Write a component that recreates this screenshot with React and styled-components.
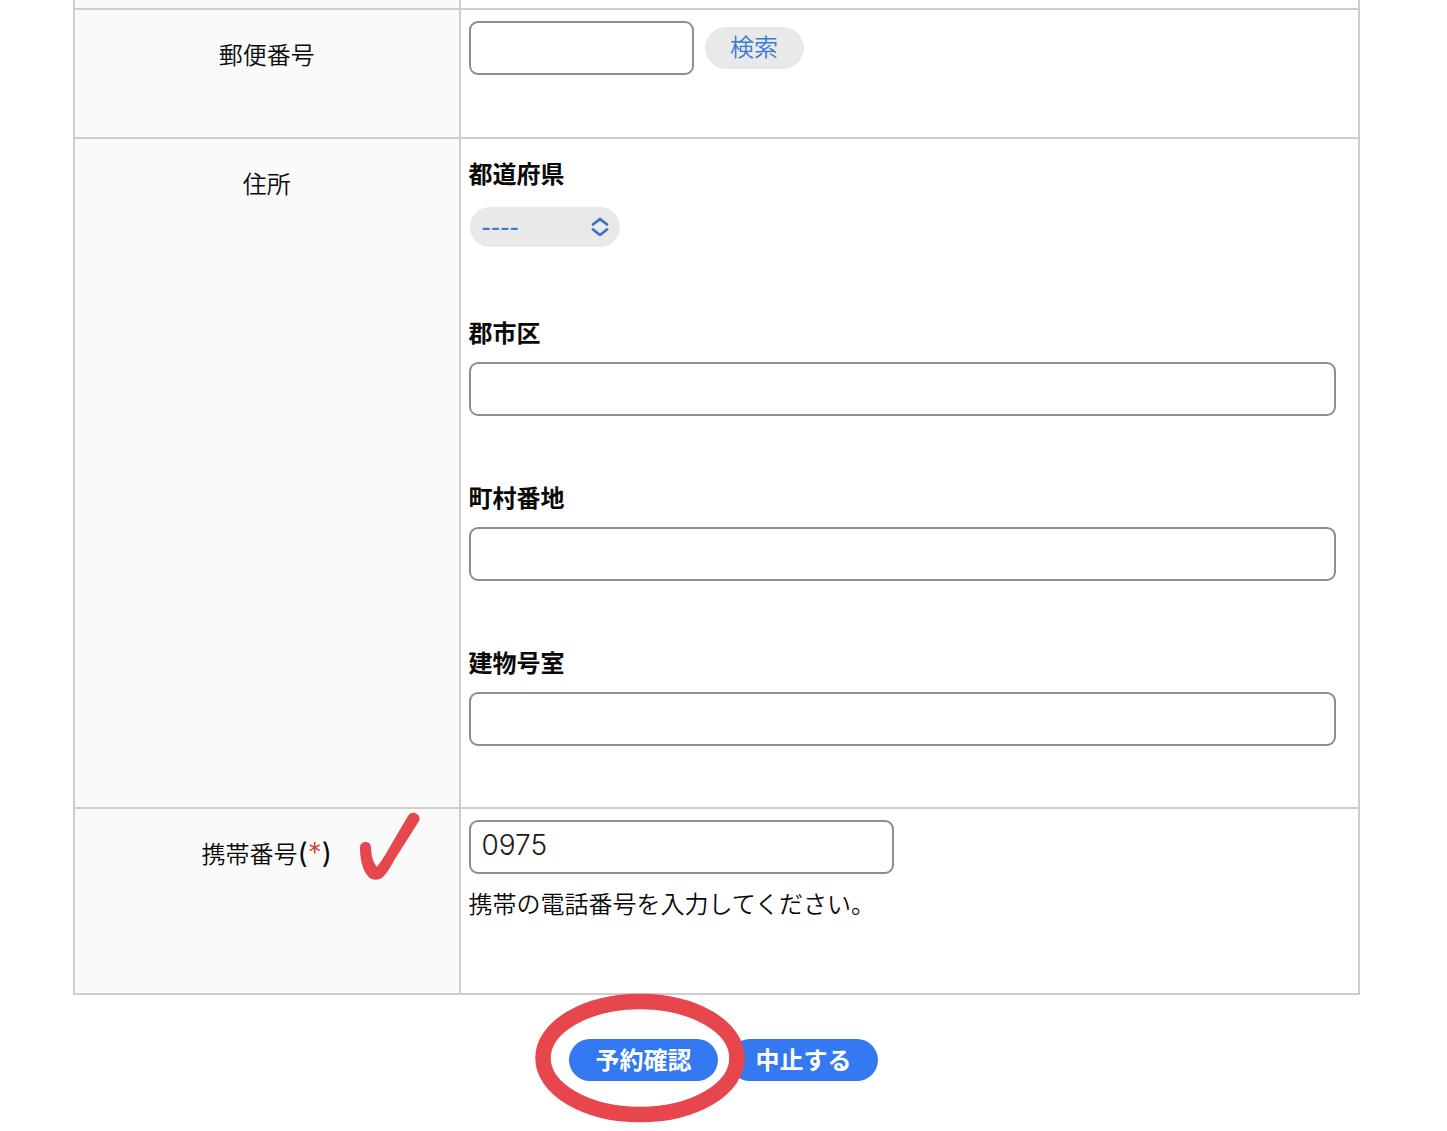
import { useState } from "react";
import styled, { createGlobalStyle } from "styled-components";

const GlobalStyle = createGlobalStyle`
  * {
    box-sizing: border-box;
  }
  body {
    margin: 0;
    background: #fff;
    color: #0a0a0a;
    font-family: "Noto Sans CJK JP", sans-serif;
    font-size: 24px;
    line-height: 36px;
  }
  input, select, button {
    font: inherit;
  }
`;

const FormArea = styled.div`
  padding: 0 87px 0 73px;
`;

const FormTable = styled.table`
  width: 100%;
  table-layout: fixed;
  border-collapse: collapse;
`;

const HeadCell = styled.th`
  position: relative;
  width: 30%;
  padding: ${(props) => (props.$slim ? "0" : "26px 8px 0")};
  border: 2px solid #cdcdcd;
  border-top-width: ${(props) => (props.$slim ? "0" : "2px")};
  background: #fafafa;
  font-weight: 350;
  text-align: center;
  vertical-align: top;
`;

const BodyCell = styled.td`
  height: ${(props) => (props.$slim ? "9px" : "auto")};
  padding: ${(props) => (props.$slim ? "0" : "11px 22px 61px 8px")};
  border: 2px solid #cdcdcd;
  border-top-width: ${(props) => (props.$slim ? "0" : "2px")};
  vertical-align: top;
`;

const Mark = styled.span`
  color: ${(props) => (props.$required ? "#d63a2c" : "inherit")};
  font-family: Inter, sans-serif;
  font-size: 28px;
  font-weight: ${(props) => (props.$required ? "300" : "400")};
`;

const TextInput = styled.input`
  display: block;
  width: ${(props) => props.$width || "100%"};
  height: 54px;
  padding: 0 11px 4px;
  border: 2px solid #8e8e8e;
  border-radius: 9px;
  background: #fff;
  color: #1a1a1a;
  font-family: Inter, sans-serif;
  font-size: 28px;
  font-weight: 350;
  outline: none;
`;

const ZipRow = styled.div`
  display: flex;
  align-items: center;
  gap: 11px;
  padding-bottom: 1px;
`;

const SearchButton = styled.button`
  width: 99px;
  height: 42px;
  padding: 0 0 4px;
  border: 0;
  border-radius: 21px;
  background: #e9e9e9;
  color: #3b7bd0;
  font-weight: 350;
  line-height: 36px;
`;

const AddressFields = styled.div`
  display: flex;
  flex-direction: column;
  gap: 63px;
  padding-top: 5px;
`;

const Field = styled.div`
  display: flex;
  flex-direction: column;
  align-items: flex-start;
  gap: 12px;
`;

const FieldLabel = styled.label`
  font-weight: 700;
`;

const SelectBox = styled.div`
  display: grid;
  align-items: center;
  width: 150px;
  margin: 4px 1px;
`;

const Select = styled.select`
  grid-area: 1 / 1;
  width: 100%;
  height: 40px;
  padding: 0 40px 0 12px;
  border: 0;
  border-radius: 20px;
  background: #e9e9e9;
  color: #3b7bd0;
  font-family: "Liberation Sans", "Noto Sans CJK JP", sans-serif;
  font-size: 28px;
  appearance: none;
  outline: none;
`;

const SelectArrows = styled.svg`
  grid-area: 1 / 1;
  justify-self: end;
  margin-right: 11px;
  pointer-events: none;
`;

const HelpText = styled.p`
  margin: 11px 0;
  font-weight: 350;
`;

const CheckMark = styled.svg`
  position: absolute;
  top: 1px;
  right: 38px;
`;

const Actions = styled.div`
  display: flex;
  justify-content: center;
  gap: 11px;
  margin-top: 44px;
  padding-bottom: 50px;
`;

const Highlighted = styled.div`
  position: relative;
`;

const Circle = styled.svg`
  position: absolute;
  z-index: 1;
  top: -46px;
  left: -34px;
  pointer-events: none;
`;

const ActionButton = styled.button`
  display: block;
  width: 149px;
  height: 42px;
  padding: 0 0 2px;
  border: 0;
  border-radius: 21px;
  background: #3478f2;
  color: #fff;
  font-weight: 700;
  line-height: 36px;
`;

const addressInputs = [
  { id: "city", label: "郡市区" },
  { id: "town", label: "町村番地" },
  { id: "building", label: "建物号室" },
];

const App = () => {
  const [form, setForm] = useState({
    zip: "",
    prefecture: "",
    city: "",
    town: "",
    building: "",
    mobile: "0975",
  });

  const handleChange = (e) => {
    const { id, value } = e.target;
    setForm((prev) => ({ ...prev, [id]: value }));
  };

  return (
    <>
      <GlobalStyle />
      <FormArea>
        <FormTable>
          <tbody>
            <tr>
              <HeadCell $slim />
              <BodyCell $slim />
            </tr>
            <tr>
              <HeadCell scope="row">
                <label htmlFor="zip">郵便番号</label>
              </HeadCell>
              <BodyCell>
                <ZipRow>
                  <TextInput
                    id="zip"
                    $width="225px"
                    value={form.zip}
                    onChange={handleChange}
                  />
                  <SearchButton type="button">検索</SearchButton>
                </ZipRow>
              </BodyCell>
            </tr>
            <tr>
              <HeadCell scope="row">住所</HeadCell>
              <BodyCell>
                <AddressFields>
                  <Field>
                    <FieldLabel htmlFor="prefecture">都道府県</FieldLabel>
                    <SelectBox>
                      <Select
                        id="prefecture"
                        value={form.prefecture}
                        onChange={handleChange}
                      >
                        <option value="">----</option>
                        <option value="東京都">東京都</option>
                        <option value="大阪府">大阪府</option>
                        <option value="大分県">大分県</option>
                      </Select>
                      <SelectArrows width="18" height="20" viewBox="0 0 18 20">
                        <path
                          d="M2 7.5 9 2l7 5.5M2 12.5 9 18l7-5.5"
                          fill="none"
                          stroke="#3b74c4"
                          strokeWidth="2.8"
                          strokeLinecap="round"
                          strokeLinejoin="round"
                        />
                      </SelectArrows>
                    </SelectBox>
                  </Field>
                  {addressInputs.map(({ id, label }) => (
                    <Field key={id}>
                      <FieldLabel htmlFor={id}>{label}</FieldLabel>
                      <TextInput
                        id={id}
                        value={form[id]}
                        onChange={handleChange}
                      />
                    </Field>
                  ))}
                </AddressFields>
              </BodyCell>
            </tr>
            <tr>
              <HeadCell scope="row">
                <label htmlFor="mobile">
                  携帯番号<Mark>(</Mark>
                  <Mark $required>*</Mark>
                  <Mark>)</Mark>
                </label>
                <CheckMark width="64" height="72" viewBox="0 0 64 72">
                  <path
                    d="M8.500 32C5 32 3 34.500 3 38C3 48 5 58 10 65C14 71 22 71 26 67C31 62 34 56 38 49L62 11C65 5 55 -1 51 6L38 28C32 38 27 48 20 57C16 52 14.500 46 14 38C14 34 12 32 8.500 32Z"
                    fill="#e6464c"
                  />
                </CheckMark>
              </HeadCell>
              <BodyCell>
                <TextInput
                  id="mobile"
                  type="tel"
                  $width="425px"
                  value={form.mobile}
                  onChange={handleChange}
                />
                <HelpText>携帯の電話番号を入力してください。</HelpText>
              </BodyCell>
            </tr>
          </tbody>
        </FormTable>
      </FormArea>
      <Actions>
        <Highlighted>
          <ActionButton type="button">予約確認</ActionButton>
          <Circle width="210" height="130" viewBox="0 0 210 130">
            <ellipse
              cx="105"
              cy="65"
              rx="97"
              ry="56.500"
              fill="none"
              stroke="#e6464c"
              strokeWidth="15.5"
            />
          </Circle>
        </Highlighted>
        <ActionButton type="button">中止する</ActionButton>
      </Actions>
    </>
  );
};

export default App;
